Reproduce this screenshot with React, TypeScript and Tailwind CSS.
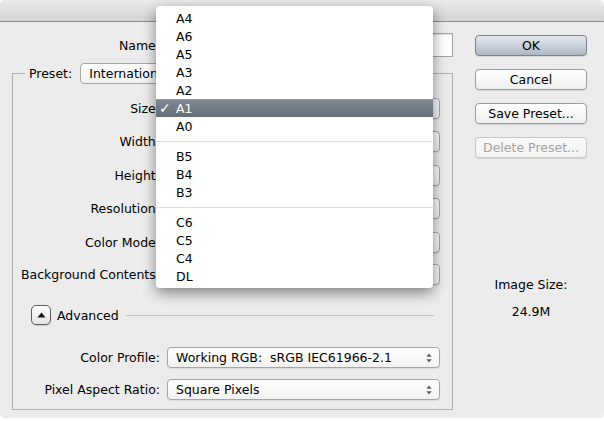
import React from 'react'

const menuGroups = [
  ['A4', 'A6', 'A5', 'A3', 'A2', 'A1', 'A0'],
  ['B5', 'B4', 'B3'],
  ['C6', 'C5', 'C4', 'DL'],
]

// values of these controls sit under the open menu, so only their frames show
const rows = [
  { label: 'Size:', gap: 'mt-0' },
  { label: 'Width:', field: true, gap: 'mt-[12px]' },
  { label: 'Height:', field: true, gap: 'mt-[13px]' },
  { label: 'Resolution:', field: true, gap: 'mt-[12px]' },
  { label: 'Color Mode:', field: true, gap: 'mt-[13px]' },
  { label: 'Background Contents:', gap: 'mt-[11px]' },
]

function Stepper() {
  return (
    <svg width="6" height="10" viewBox="0 0 6 10" className="shrink-0">
      <path d="M3 0.5 L5.6 3.8 L0.4 3.8 Z" fill="#5a5a5a" />
      <path d="M3 9.5 L5.6 6.2 L0.4 6.2 Z" fill="#5a5a5a" />
    </svg>
  )
}

function Popup({ value = '', className = '' }: { value?: string; className?: string }) {
  return (
    <div
      className={`flex h-[21px] items-center rounded-[4px] border border-[#a6a6a6] bg-gradient-to-b from-white to-[#f2f2f2] pl-[8px] pr-[7px] shadow-[0_1px_1px_rgba(0,0,0,0.08)] ${className}`}
    >
      <span className="flex-1 truncate whitespace-pre">{value}</span>
      <Stepper />
    </div>
  )
}

function Button({ children, primary, disabled }: { children: React.ReactNode; primary?: boolean; disabled?: boolean }) {
  let look = 'border-[#9c9c9c] from-white to-[#f0f0f0] text-black'
  if (primary) look = 'border-[#7d8591] from-[#e6eaef] to-[#aeb8c4] text-black'
  if (disabled) look = 'border-[#c6c6c6] from-[#fafafa] to-[#f2f2f2] text-[#a3a3a3]'
  return (
    <div
      className={`flex h-[21px] w-[112px] items-center justify-center rounded-[4px] border bg-gradient-to-b shadow-[0_1px_1px_rgba(0,0,0,0.1)] ${look}`}
    >
      {children}
    </div>
  )
}

export default function App() {
  return (
    <div className="relative h-[421px] w-[604px] overflow-hidden bg-white font-['DejaVu_Sans',sans-serif] text-[12.5px] leading-[15px] text-black">
      <div className="flex h-[418px] flex-col rounded-[5px] bg-[#ececec]">
        {/* title bar */}
        <div className="h-[22px] shrink-0 rounded-t-[5px] border-b border-[#8e8e8e] bg-gradient-to-b from-[#ececec] to-[#d2d2d2]" />

        <div className="flex items-start">
          {/* left column */}
          <div className="ml-[12px] w-[441px]">
            <div className="mt-[11px] flex h-[24px] items-center">
              <div className="w-[148px] text-right">Name:</div>
              <div className="ml-[7px] h-[24px] w-[286px] border border-[#a3a3a3] bg-white shadow-[inset_0_1px_1px_rgba(0,0,0,0.12)]" />
            </div>

            <fieldset className="mt-[6px] border border-[#b1b1b1] pb-[9px]">
              <legend className="ml-[12px] flex items-center px-[4px]">
                <span>Preset:</span>
                <div className="ml-[8px] flex h-[21px] w-[220px] items-center rounded-[4px] border border-[#a6a6a6] bg-gradient-to-b from-white to-[#f2f2f2] pl-[8px]">
                  <span className="whitespace-nowrap">International</span>
                </div>
              </legend>

              <div className="pt-[14px]">
                {rows.map((r) => (
                  <div key={r.label} className={`flex h-[21px] items-center ${r.gap}`}>
                    <div className="w-[147px] text-right">{r.label}</div>
                    <div className="ml-[7px] flex w-[273px] items-center gap-[6px]">
                      {r.field && <div className="h-[21px] w-[150px] border border-[#a3a3a3] bg-white" />}
                      <Popup className="flex-1" />
                    </div>
                  </div>
                ))}

                <div className="mt-[20px] flex h-[20px] items-center">
                  <div className="ml-[18px] flex h-[20px] w-[20px] items-center justify-center rounded-[5px] border border-[#5e5e5e] bg-gradient-to-b from-white to-[#e4e4e4] shadow-[0_1px_1px_rgba(0,0,0,0.15)]">
                    <svg width="9" height="6" viewBox="0 0 9 6">
                      <path d="M4.5 0.5 L8.5 5.5 L0.5 5.5 Z" fill="#111" />
                    </svg>
                  </div>
                  <span className="ml-[6px]">Advanced</span>
                  <div className="ml-[7px] mr-[18px] h-px flex-1 bg-[#c4c4c4]" />
                </div>

                <div className="mt-[22px] flex h-[21px] items-center">
                  <div className="w-[147px] text-right">Color Profile:</div>
                  <Popup value="Working RGB:  sRGB IEC61966-2.1" className="ml-[7px] w-[273px]" />
                </div>
                <div className="mt-[11px] flex h-[21px] items-center">
                  <div className="w-[147px] text-right">Pixel Aspect Ratio:</div>
                  <Popup value="Square Pixels" className="ml-[7px] w-[273px]" />
                </div>
              </div>
            </fieldset>
          </div>

          {/* right column */}
          <div className="ml-[22px] mt-[13px] flex w-[112px] flex-col">
            <div className="flex flex-col gap-[13px]">
              <Button primary>OK</Button>
              <Button>Cancel</Button>
              <Button>Save Preset...</Button>
              <Button disabled>Delete Preset...</Button>
            </div>
            <div className="mt-[119px] text-center">Image Size:</div>
            <div className="mt-[12px] text-center">24.9M</div>
          </div>
        </div>
      </div>

      {/* open Size menu */}
      <div className="absolute left-[156px] top-[6px] w-[277px] rounded-[4px] bg-white py-[3px] shadow-[0_5px_14px_rgba(0,0,0,0.45)]">
        {menuGroups.map((group, gi) => (
          <div key={gi}>
            {gi > 0 && (
              <div className="flex h-[12px] items-center">
                <div className="h-px w-full bg-[#dedede]" />
              </div>
            )}
            {group.map((item) =>
              item === 'A1' ? (
                <div
                  key={item}
                  className="flex h-[18px] items-center border-t border-[#8f97a1] bg-gradient-to-b from-[#7e8792] to-[#646d78] text-white"
                >
                  <span className="w-[20px] pl-[3px] text-[14px] font-bold">✓</span>
                  <span>{item}</span>
                </div>
              ) : (
                <div key={item} className="flex h-[18px] items-center">
                  <span className="w-[20px]" />
                  <span>{item}</span>
                </div>
              )
            )}
          </div>
        ))}
      </div>
    </div>
  )
}
